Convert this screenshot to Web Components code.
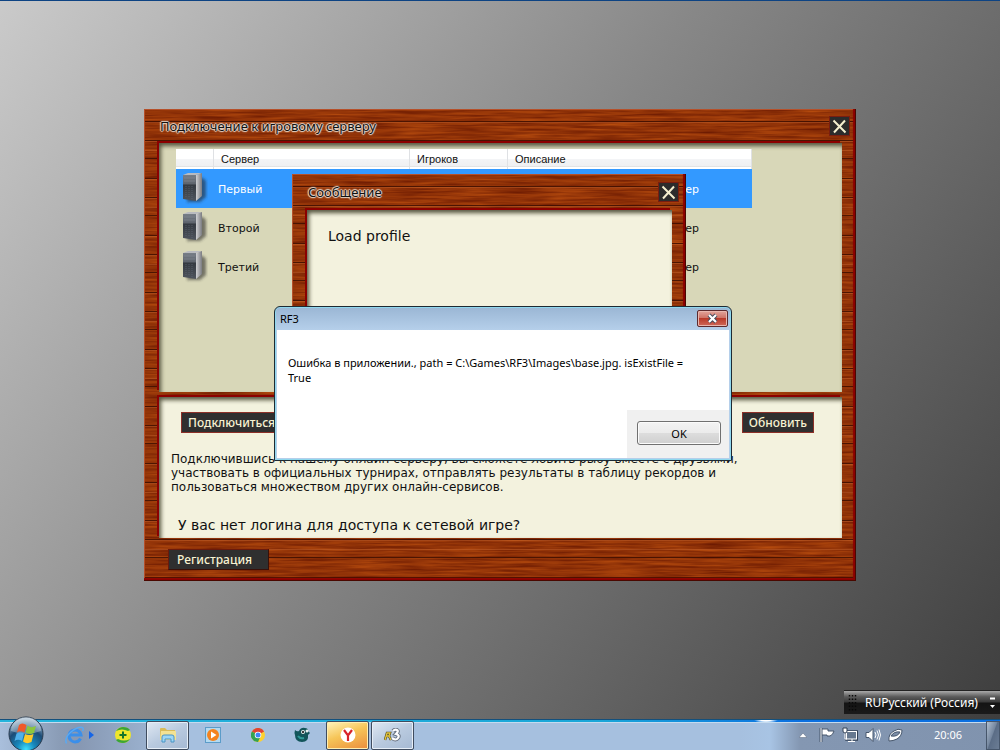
<!DOCTYPE html>
<html lang="ru">
<head>
<meta charset="utf-8">
<title>RF3</title>
<style>
html,body{margin:0;height:100%}
body{overflow:hidden;font-family:"DejaVu Sans",Verdana,sans-serif;color:#111}
</style>
</head>
<body>
<game-desktop>
  <wood-window slot="window" style="left:14.4%;right:14.4%;top:108px" heading="Подключение к игровому серверу">
    <server-list></server-list>
    <connect-panel slot="second"></connect-panel>
    <wood-button slot="footer" wide>Регистрация</wood-button>
  </wood-window>
  <wood-window slot="window" style="left:29.2%;width:394px;top:173px" heading="Сообщение" compact>
    <message-text>Load profile</message-text>
  </wood-window>
  <aero-dialog slot="window" style="left:27.4%;width:458px;top:305px" heading="RF3" action="OK">Ошибка в приложении., path = C:\Games\RF3\Images\base.jpg. isExistFile = True</aero-dialog>
  <language-bar slot="window"></language-bar>
  <task-bar slot="taskbar"></task-bar>
</game-desktop>

<script>
function define(name, html, setup) {
  const template = document.createElement('template');
  template.innerHTML = html;
  customElements.define(name, class extends HTMLElement {
    constructor() {
      super();
      this.attachShadow({ mode: 'open' }).append(template.content.cloneNode(true));
    }
    connectedCallback() { if (setup) setup(this, this.shadowRoot); }
  });
}

define('game-desktop', `
<style>
:host{display:flex;flex-direction:column;height:100vh;box-sizing:border-box;border-top:1px solid #0d4383;
 background:linear-gradient(127deg,#cacaca 0%,#878787 45%,#3c3c3c 100%)}
main{flex:1;position:relative;min-height:0}
::slotted([slot=window]){position:absolute}
</style>
<main><slot name="window"></slot></main>
<slot name="taskbar"></slot>`);

define('wood-window', `
<style>
:host{display:block}
.frame{position:relative;isolation:isolate;box-sizing:border-box;padding:0 14px 0 15px}
.grain{position:absolute;inset:0;width:100%;height:100%;z-index:-1}
.edge{position:absolute;inset:0;z-index:-1;box-shadow:inset -1px -1px 0 #4a0800,inset -3px -3px 1px #8b0000,inset 1px 1px 0 #b5502a}
header{display:flex;align-items:center;justify-content:space-between;height:34px;margin-right:-8px}
h2{margin:0;font:13px/16px "Noto Sans",Tahoma,sans-serif;color:#111;padding:0 0 0 1px;
 text-shadow:1px 0 1px #e6d9cd,-1px 0 1px #e6d9cd,0 1px 1px #e6d9cd,0 -1px 1px #e6d9cd,0 0 2px #e6d9cd}
.close{width:21px;height:20px;padding:0;background:#2c2c2c;border:1px solid #7a1d10;display:flex;align-items:center;justify-content:center}
.pane{box-sizing:border-box;box-shadow:-2px -2px 0 #8b0000,inset 2px 3px 4px #55553f}
.first{background:#d8d7b8;min-height:249px}
.second{background:#f3f2de;margin-top:5px;min-height:141px}
footer{height:43px;display:flex;align-items:center;padding-left:9px}
:host([compact]) .first{background:#f3f2de;min-height:210px}
:host([compact]) .second{display:none}
:host([compact]) footer{height:20px}
:host([compact]) header{height:36px;margin-right:-7px}
</style>
<section class="frame">
 <svg class="grain" aria-hidden="true">
  <defs>
   <filter id="wood" x="0" y="0" width="100%" height="100%" color-interpolation-filters="sRGB">
    <feTurbulence type="fractalNoise" baseFrequency=".02 .4" numOctaves="3" seed="8"/>
    <feColorMatrix values=".36 0 0 0 .39  .24 0 0 0 .08  .06 0 0 0 0  0 0 0 0 1"/>
   </filter>
   <pattern id="planks" width="900" height="57" patternUnits="userSpaceOnUse">
    <path d="M0 12.500H900M0 31.500H900M0 49.500H900" stroke="#3a0d00" stroke-opacity=".8"/>
    <path d="M0 13.500H900M0 32.500H900M0 41.500H900" stroke="#c0602c" stroke-opacity=".5"/>
   </pattern>
  </defs>
  <rect width="100%" height="100%" fill="#983206" filter="url(#wood)"/>
  <rect width="100%" height="100%" fill="url(#planks)"/>
 </svg>
 <div class="edge"></div>
 <header><h2></h2>
  <button class="close" aria-label="Закрыть"><svg width="15" height="15" viewBox="0 0 15 15"><path d="M1.500 1.500 13.500 13.500M13 1.500 2 13.500" stroke="#f5efcf" stroke-width="2" fill="none"/></svg></button>
 </header>
 <div class="pane first"><slot></slot></div>
 <div class="pane second"><slot name="second"></slot></div>
 <footer><slot name="footer"></slot></footer>
</section>`, (el, root) => { root.querySelector('h2').textContent = el.getAttribute('heading'); });

define('wood-button', `
<style>
:host{display:inline-block}
button{display:block;height:21px;box-sizing:border-box;padding:0 6px;border:1px solid #8c3028;background:#2f2f2f;
 color:#f7f2d2;font:500 12px/19px "Noto Sans",Tahoma,sans-serif;white-space:nowrap}
:host([wide]) button{padding:0 16px 0 8px;border-color:#6b1a0c #3a1008 #3a1008 #6b1a0c}
</style><button><slot></slot></button>`);

define('message-text', `
<style>:host{display:block;padding:17px 21px;font-size:14px;line-height:18px}</style><slot></slot>`);

define('server-list', `
<style>
:host{display:block;padding:6px 90px 0 17px}
table{width:100%;border-collapse:collapse;table-layout:fixed;font-size:11px}
th{height:20px;padding:0 0 0 7px;box-sizing:border-box;text-align:left;font:11px/16px "Liberation Sans",Arial,sans-serif;
 background:linear-gradient(90deg,transparent calc(100% - 1px),#dfe1e4 0),linear-gradient(#fff 50%,#f3f4f6 50%,#eff0f2 85%,#d9dadc 86%,#fff 92%)}
td{height:39px;padding:2px 0 0 4px;box-sizing:border-box}
td:first-child{padding-top:0}
td svg{display:block;margin-left:1px}
tr.selected{background:#3399ff;color:#fff}
td:last-child{text-align:right;padding-right:53px}
</style>
<table>
<colgroup><col style="width:38px"><col style="width:196px"><col style="width:98px"><col></colgroup>
<thead><tr><th></th><th>Сервер</th><th>Игроков</th><th>Описание</th></tr></thead>
<tbody></tbody></table>`, (el, root) => {
  const body = root.querySelector('tbody');
  body.innerHTML = ['Первый', 'Второй', 'Третий'].map((n, i) => `
  <tr${i ? '' : ' class="selected"'}><td><svg width="28" height="34" viewBox="0 0 28 34">
   <defs><linearGradient id="s${i}"><stop stop-color="#d0d1d4"/><stop offset="1" stop-color="#7b7c81"/></linearGradient>
   <linearGradient id="f${i}" x2="0" y2="1"><stop stop-color="#777e87"/><stop offset=".35" stop-color="#5d636c"/><stop offset=".38" stop-color="#343940"/><stop offset="1" stop-color="#4f555e"/></linearGradient>
   <filter id="b${i}"><feGaussianBlur stdDeviation="1.500"/></filter></defs>
   <path d="M8 6h14l3 3v16l-6 5H6z" fill="#222" opacity=".55" filter="url(#b${i})"/>
   <path d="M2 3 7 1H21L15 3z" fill="#b9bbc0"/><path d="M15 3 21 1V24L15 29z" fill="url(#s${i})"/>
   <path d="M2 3H15V29L2 27z" fill="url(#f${i})"/>
   <path d="M3 6H14M3 9H14" stroke="#8d949c" stroke-opacity=".45"/>
   <path d="M5 14V26M8 14V26M11 14V27" stroke="#66707c" stroke-opacity=".6" stroke-dasharray="1 1"/></svg></td>
   <td>${n}</td><td></td><td>сервер</td></tr>`).join('');
});

define('connect-panel', `
<style>
:host{display:block;padding:15px 28px 3px 22px}
.actions{display:flex;justify-content:space-between}
p{margin:19px 0 0 -10px;font-size:12px;line-height:14px;max-width:580px}
.ask{font-size:14px;line-height:18px;margin:22px 0 0 -3px}
</style>
<div class="actions"><wood-button>Подключиться</wood-button><wood-button>Обновить</wood-button></div>
<p>Подключившись к нашему онлайн серверу, вы сможете ловить рыбу вместе с друзьями,<br>участвовать в официальных турнирах, отправлять результаты в таблицу рекордов и<br>пользоваться множеством других онлайн-сервисов.</p>
<p class="ask">У вас нет логина для доступа к сетевой игре?</p>`);

define('aero-dialog', `
<style>
:host{display:block;font:11px/15px "Noto Sans","Segoe UI",sans-serif;color:#000}
section{display:flex;flex-direction:column;box-sizing:border-box;min-height:155px;border:1px solid #1e2a33;border-radius:6px 6px 0 0;overflow:hidden;
 background:linear-gradient(#9ab6d4,#b5cfea 23px);padding:0 2px 2px;box-shadow:inset 0 0 0 1px #8fd8ee}
header{display:flex;height:23px;align-items:center;justify-content:space-between;padding:0 1px 0 3px}
h2{margin:0;font:inherit}
.close{width:31px;height:17px;padding:0;border:1px solid #5c2a2e;border-radius:2px;display:flex;align-items:center;justify-content:center;
 background:linear-gradient(#e2a59c,#cf7468 45%,#b93a2a 50%,#d0695a);box-shadow:inset 0 0 0 1px #e8b6ae}
.body{flex:1;background:#fff;display:flex;flex-direction:column;justify-content:space-between}
p{margin:25px 20px 0 11px}
.foot{align-self:flex-end;background:#f0f0f0;padding:11px 8px 13px 10px}
.ok{display:block;width:84px;height:24px;border:1px solid #707070;border-radius:3px;font:inherit;padding:0;
 background:linear-gradient(#f3f3f3,#ebebeb 50%,#dddddd 50%,#cfcfcf);box-shadow:inset 0 0 0 1px #fbfbfb}
</style>
<section role="dialog"><header><h2></h2><button class="close" aria-label="Закрыть"><svg width="13" height="11" viewBox="0 0 13 11"><path d="M3 2 10 9M10 2 3 9" stroke="#444a5c" stroke-width="4"/><path d="M3 2 10 9M10 2 3 9" stroke="#fff" stroke-width="2.200"/></svg></button></header>
<div class="body"><p><slot></slot></p><div class="foot"><button class="ok"></button></div></div></section>`, (el, root) => {
  root.querySelector('h2').textContent = el.getAttribute('heading');
  root.querySelector('.ok').textContent = el.getAttribute('action');
});

define('language-bar', `
<style>
:host{right:0;bottom:5px;display:flex;align-items:center;height:24px;width:156px;box-sizing:border-box;border-top:1px solid #222;
 background:linear-gradient(#aaa,#5a5a5a 25%,#3a3a3a 48%,#141414 52%,#1a1a1a);color:#fff;font:12px/16px "Noto Sans","Segoe UI",sans-serif;white-space:nowrap}
.grip{margin:0 8px 0 4px}
.menu{margin-left:auto;margin-right:4px}
</style>
<svg class="grip" width="9" height="18" viewBox="0 0 9 18"><path d="M1.500 1V18M4.500 1V18M7.500 1V18" stroke="#080808" stroke-width="1.500" stroke-dasharray="1.500 2"/></svg>
<span>RU</span><span>Русский (Россия)</span>
<svg class="menu" width="7" height="14" viewBox="0 0 7 14"><path d="M1 2.500H6" stroke="#fff" stroke-width="2"/><path d="M1 9H6L3.500 12z" fill="#fff"/></svg>`);

define('task-bar', `
<style>
:host{display:block;position:relative}
nav{display:flex;align-items:center;height:31px;box-sizing:border-box;border-top:1px solid #14507c;
 background:linear-gradient(#c5dbef,#c5dbef) 0 2px/100% 1px no-repeat,
  radial-gradient(ellipse 12px 3px at 76.6% 0,#fff 40%,transparent) 0 0/100% 3px no-repeat,
  linear-gradient(90deg,#25b4dc,#1aa6d8 60%,#0b6fe0 80%) 0 0/100% 2px no-repeat,
  linear-gradient(90deg,#a9bfdc 0,#8a9cb6 6%,#8798b3 8%,#a6c0df 19%,#a6c0df 74%,#a8c4e4 77%,#8497b2 80%,#8093ae 100%)}
button{flex:none;border:0;padding:0;background:none;width:45px;height:29px;display:flex;align-items:center;justify-content:center;box-sizing:border-box}
.start{width:52px}
.start svg{margin-top:-3px;flex:none}
.app{border:1px solid #3f4c5f;border-radius:2px;width:43px;margin:0 1px;
 background:linear-gradient(150deg,#dfe8f2,#b9cadf 50%,#a5b9d3);box-shadow:inset 0 0 0 1px #e6eef7}
.hot{background:linear-gradient(160deg,#fff4bd,#f6c558 45%,#ea8c3c);box-shadow:inset 0 0 0 1px #ffeeb0}
.tray{margin-left:auto;display:flex;align-items:center;color:#fff;font:11px/16px "Noto Sans","Segoe UI",sans-serif}
.tray button{width:auto;margin-right:7px}
.tray .peek{width:14px;margin:0;border:1px solid #46566b;background:linear-gradient(110deg,#b1c0d1,#75879f 45%,#5b6d86 50%,#6b7d95)}
time{margin:0 24px}
</style>
<nav>
<button class="start" aria-label="Пуск"><svg width="36" height="36" viewBox="0 0 36 36"><defs><radialGradient id="orb" cx=".5" cy=".95" r=".9"><stop stop-color="#3ce0ff"/><stop offset=".3" stop-color="#1787bb"/><stop offset=".65" stop-color="#1c4c77"/><stop offset="1" stop-color="#a9bfd2"/></radialGradient></defs>
<circle cx="18" cy="18" r="17" fill="url(#orb)" stroke="#26384c"/><path d="M3 15A15 14 0 0 1 33 15Q18 21 3 15z" fill="#fff" opacity=".32"/>
<path d="M11 9Q14 6 18.500 9L16.500 16.500Q12 14 9 16.500z" fill="#f0592a"/><path d="M19.500 9.500Q23 12.500 28 10L26 17Q21 19 17.500 16.500z" fill="#8cc63e"/><path d="M8.500 17.500Q12 15.500 16 17.500L14 25Q10 22.500 6.500 25z" fill="#4fb0ea"/><path d="M17 18Q21 20 25.500 18L23.500 26Q19 28.500 15 25.500z" fill="#fdc928"/></svg></button>
<button aria-label="Internet Explorer"><svg width="21" height="20" viewBox="0 0 21 20"><path d="M16.500 13.500A6 6 0 1 1 17 10H6" fill="none" stroke="#3b8fea" stroke-width="3"/><path d="M2.500 18.500Q0 13 7 7Q14 1 18.500 2.500Q20 3.500 18.500 6" fill="none" stroke="#5aa9f2" stroke-width="1.500"/></svg></button>
<svg width="5" height="8" viewBox="0 0 5 8" style="margin-left:-8px;margin-right:6px"><path d="M0 0 5 4 0 8z" fill="#1565e8"/></svg>
<button aria-label="Антивирус"><svg width="18" height="18" viewBox="0 0 18 18"><circle cx="9" cy="9" r="8" fill="#efe62c"/><path d="M2 5Q5 1 9 1Q14 1 16 4L14 5Q8 2 2 5M16 13Q13 17 9 17Q4 17 2 14L4 13Q10 16 16 13" fill="#3ba536"/><path d="M9 5.500V12.500M5.500 9H12.500" stroke="#15742c" stroke-width="2"/></svg></button>
<button class="app" aria-label="Проводник"><svg width="18" height="16" viewBox="0 0 18 16"><path d="M1 2Q1 1 2 1H6L8 3H16V13H1z" fill="#d9bb58"/><path d="M2 4H17V13H1z" fill="#f3e293"/><path d="M3 15V10Q3 8 5 8H13Q15 8 15 10V15H12V12H6V15z" fill="#9bd6f6" stroke="#4a94c4"/></svg></button>
<button aria-label="Проигрыватель"><svg width="16" height="16" viewBox="0 0 16 16"><rect x=".5" y=".5" width="15" height="15" fill="#b4daf1" stroke="#5b9cc9"/><circle cx="8" cy="8" r="6" fill="#f4831f"/><path d="M6 4.500V11.500L11.500 8z" fill="#fff"/></svg></button>
<button aria-label="Chrome"><svg width="14" height="14" viewBox="0 0 14 14"><circle cx="7" cy="7" r="7" fill="#fcd02f"/><path d="M7 7 .9 3.500A7 7 0 0 1 13.100 3.500z" fill="#e04434"/><path d="M7 7 .9 3.500A7 7 0 0 0 7 14L9.500 8.500z" fill="#34a351"/><circle cx="7" cy="7" r="3.300" fill="#fff"/><circle cx="7" cy="7" r="2.500" fill="#4286f5"/></svg></button>
<button aria-label="Клиент"><svg width="17" height="16" viewBox="0 0 17 16"><path d="M1 3Q3 5 5 4Q7 0 11 1Q14 1 14 4L16 6 14 8Q15 15 8 15Q1 15 1 8Q0 6 1 3" fill="#12555a"/><path d="M4 9Q6 12 10 11" stroke="#2f9a98" stroke-width="2" fill="none"/><circle cx="9" cy="5" r="2" fill="#e6eeee"/><circle cx="13" cy="4" r="1.500" fill="#e6eeee"/><circle cx="9" cy="5" r="1"/></svg></button>
<button class="app hot" aria-label="Яндекс Браузер"><svg width="16" height="16" viewBox="0 0 16 16"><circle cx="8" cy="8" r="7.500" fill="#fff"/><path d="M4 3 8 8.500 12 3M8 8V14" fill="none" stroke="#d8232a" stroke-width="2.200"/></svg></button>
<button class="app" aria-label="RF3"><svg width="18" height="14" viewBox="0 0 18 14"><path d="M1 12 3 5H6L5 8H2M5 8 7 12" fill="none" stroke="#4c4520" stroke-width="2.500"/><path d="M1 12 3 5H6L5 8H2M5 8 7 12" fill="none" stroke="#e3c53b" stroke-width="1.300"/><path d="M9 3Q11 1 13 2T12 6Q16 7 14 10T8 10" fill="none" stroke="#667080" stroke-width="4"/><path d="M9 3Q11 1 13 2T12 6Q16 7 14 10T8 10" fill="none" stroke="#fff" stroke-width="2.200"/></svg></button>
<div class="tray">
<button aria-label="Скрытые значки"><svg width="8" height="5" viewBox="0 0 8 5"><path d="M0 4.500 4 0 8 4.500z" fill="#fff" stroke="#55657c" stroke-width=".5"/></svg></button>
<button aria-label="Центр поддержки" style="margin-left:5px"><svg width="16" height="16" viewBox="0 0 16 16"><path d="M2 1V15" stroke="#46566c" stroke-width="3"/><path d="M3 2H9V4H15Q14 8 11 9H8V8H3z" fill="#fff" stroke="#46566c"/><path d="M2 1V15" stroke="#fff"/></svg></button>
<button aria-label="Сеть"><svg width="16" height="16" viewBox="0 0 16 16"><rect x="4.500" y="4.500" width="11" height="8" fill="#66788f" stroke="#334257" stroke-width="2.500"/><rect x="4.500" y="4.500" width="10" height="7.500" fill="#66788f" stroke="#fff"/><path d="M10 12V14.500M6 14.500H13M3 6V12H5" stroke="#fff" fill="none"/><path d="M1 1H5V4Q5 6 3 6T1 4z" fill="#fff" stroke="#334257"/></svg></button>
<button aria-label="Громкость"><svg width="16" height="16" viewBox="0 0 16 16"><path d="M1 5.500H4L8 1.500V14.500L4 10.500H1z" fill="#fff" stroke="#46566c"/><path d="M10 5Q12 8 10 11M12 3.500Q15 8 12 12.500M14 2.500Q17 8 14 13.500" fill="none" stroke="#fff"/></svg></button>
<button aria-label="Планшет"><svg width="15" height="14" viewBox="0 0 15 14"><path d="M1 13Q0 6 6 3Q10 0 14 2Q14 8 9 11Q5 13 1 13" fill="#fff" stroke="#46566c"/><path d="M3 8Q6 3 12 4Q10 9 3 8" fill="#7c8ea7" stroke="#46566c"/></svg></button>
<time>20:06</time><button class="peek" aria-label="Показать рабочий стол"></button>
</div>
</nav>`);
</script>
</body>
</html>
